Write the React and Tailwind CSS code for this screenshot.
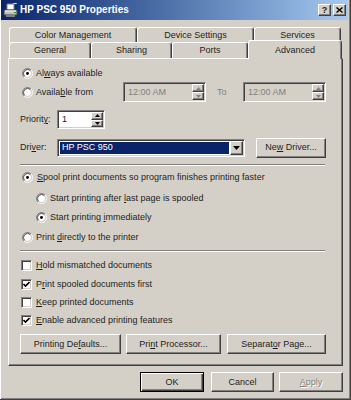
import React from 'react';

const raised =
  'border border-t-white border-l-white border-r-[#404040] border-b-[#404040] shadow-[inset_-1px_-1px_0_#808080]';
const sunken =
  'border border-t-[#808080] border-l-[#808080] border-r-white border-b-white shadow-[inset_1px_1px_0_#404040,inset_-1px_-1px_0_#d4d0c8]';

const U = ({ children }) => <span className="underline underline-offset-[1px]">{children}</span>;

const Radio = ({ on }) => (
  <svg width="11" height="11" viewBox="0 0 12 12" className="shrink-0">
    <circle cx="6" cy="6" r="4.2" fill="#fff" />
    <path d="M2.11 9.89A5.5 5.5 0 0 1 9.89 2.11" fill="none" stroke="#808080" />
    <path d="M9.89 2.11A5.5 5.5 0 0 1 2.11 9.89" fill="none" stroke="#fff" />
    <path d="M2.82 9.18A4.5 4.5 0 0 1 9.18 2.82" fill="none" stroke="#404040" />
    <path d="M9.18 2.82A4.5 4.5 0 0 1 2.82 9.18" fill="none" stroke="#d4d0c8" />
    {on && <circle cx="6" cy="6" r="1.6" fill="#000" />}
  </svg>
);

const Check = ({ on }) => (
  <div className={`w-[11px] h-[11px] shrink-0 bg-white flex items-center justify-center ${sunken}`}>
    {on && (
      <svg width="7" height="7" viewBox="0 0 7 7">
        <path d="M0.5 3l2 2 4-4" fill="none" stroke="#000" strokeWidth="1.6" />
      </svg>
    )}
  </div>
);

const Arrow = ({ down, color = '#000' }) => (
  <svg width="5" height="3" viewBox="0 0 5 3">
    <path d={down ? 'M0 0h5L2.5 3z' : 'M0 3h5L2.5 0z'} fill={color} />
  </svg>
);

const Spin = ({ disabled }) => {
  const c = disabled ? '#808080' : '#000';
  return (
    <div className="flex flex-col w-[12px] h-full shrink-0">
      <div className={`flex-1 bg-[#d4d0c8] flex items-center justify-center ${raised}`}>
        <Arrow color={c} />
      </div>
      <div className={`flex-1 bg-[#d4d0c8] flex items-center justify-center ${raised}`}>
        <Arrow down color={c} />
      </div>
    </div>
  );
};

const TimeField = () => (
  <div className={`w-[83px] h-[20px] flex items-stretch p-[1px] bg-[#d4d0c8] ${sunken}`}>
    <span className="flex-1 flex items-center pl-[3px] text-[#808080]">12:00 AM</span>
    <Spin disabled />
  </div>
);

const Button = ({ w, children, disabled, isDefault }) => (
  <div
    className={`${w} h-[20px] flex items-center justify-center bg-[#d4d0c8] ${
      isDefault
        ? 'border border-black shadow-[inset_1px_1px_0_#fff,inset_-1px_-1px_0_#404040,inset_-2px_-2px_0_#808080]'
        : raised
    } ${disabled ? 'text-[#808080] [text-shadow:1px_1px_0_#fff]' : ''}`}
  >
    <span>{children}</span>
  </div>
);

const Tab = ({ w, children }) => (
  <div
    className={`${w} h-full flex items-center justify-center rounded-t-[3px] border-t border-l border-white border-r border-r-[#404040] shadow-[inset_-1px_0_0_#808080]`}
  >
    {children}
  </div>
);

const PrinterIcon = () => (
  <svg width="15" height="15" viewBox="0 0 15 15" className="shrink-0">
    <path d="M4 1h6l1 1v5H4z" fill="#fff" stroke="#808080" />
    <path d="M1 7h13v5H1z" fill="#c0c0c0" stroke="#404040" />
    <path d="M2 8h11" stroke="#fff" />
    <path d="M3 12h9v2H3z" fill="#808080" />
    <path d="M11 9h2v1h-2z" fill="#00a000" />
    <path d="M10 1l4 -1" stroke="#fff" />
  </svg>
);

const TitleBar = () => (
  <div className="ml-[1px] mr-[2px] h-[20px] shrink-0 bg-linear-to-r from-[#0a246a] to-[#a6caf0] flex items-center">
    <div className="ml-[2px]">
      <PrinterIcon />
    </div>
    <span className="ml-[2px] text-white font-bold text-[10px]">HP PSC 950 Properties</span>
    <div className="ml-auto mr-[2px] flex gap-[2px]">
      <div className={`w-[13px] h-[12px] bg-[#d4d0c8] flex items-center justify-center font-bold text-[9px] ${raised}`}>
        ?
      </div>
      <div className={`w-[13px] h-[12px] bg-[#d4d0c8] flex items-center justify-center ${raised}`}>
        <svg width="7" height="6" viewBox="0 0 7 6">
          <path d="M0.5 0.5l6 5M6.5 0.5l-6 5" stroke="#000" strokeWidth="1.4" />
        </svg>
      </div>
    </div>
  </div>
);

const Tabs = () => (
  <div className="mt-[7px] ml-[9px] w-[333px] flex flex-col shrink-0">
    <div className="flex h-[15px]">
      <Tab w="w-[128px]">Color Management</Tab>
      <Tab w="w-[117px]">Device Settings</Tab>
      <Tab w="w-[87px]">Services</Tab>
    </div>
    <div className="flex h-[16px] items-start">
      <Tab w="w-[82px]">General</Tab>
      <Tab w="w-[81px]">Sharing</Tab>
      <Tab w="w-[76px]">Ports</Tab>
      <div className="relative z-10 -mt-[2px] w-[94px] h-[19px] bg-[#d4d0c8] flex items-center justify-center rounded-t-[3px] border-t border-l border-white border-r border-r-[#404040] shadow-[inset_-1px_0_0_#808080]">
        Advanced
      </div>
    </div>
  </div>
);

const Separator = ({ mt }) => (
  <div className={`${mt} ml-[11px] w-[305px] h-[2px] border-t border-t-[#808080] border-b border-b-white`} />
);

const Panel = () => (
  <div className={`ml-[8px] w-[335px] h-[308px] shrink-0 flex flex-col ${raised}`}>
    <div className="mt-[5px] h-[18px] ml-[13px] flex items-center">
      <Radio on />
      <span className="ml-[3px]">
        Al<U>w</U>ays available
      </span>
    </div>
    <div className="h-[20px] ml-[13px] flex items-center">
      <div className="w-[101px] flex items-center">
        <Radio />
        <span className="ml-[3px]">
          Availa<U>b</U>le from
        </span>
      </div>
      <TimeField />
      <span className="w-[37px] pl-[11px] text-[#808080]">To</span>
      <TimeField />
    </div>
    <div className="mt-[8px] h-[19px] ml-[11px] flex items-center">
      <span className="w-[37px]">
        Priorit<U>y</U>:
      </span>
      <div className={`w-[48px] h-[19px] bg-white flex items-stretch p-[1px] ${sunken}`}>
        <span className="flex-1 flex items-center pl-[3px]">1</span>
        <Spin />
      </div>
    </div>
    <div className="mt-[9px] h-[19px] ml-[11px] flex items-center">
      <span className="w-[37px]">
        Dri<U>v</U>er:
      </span>
      <div className={`w-[188px] h-[18px] bg-white flex items-stretch p-[1px] ${sunken}`}>
        <span className="flex-1 flex items-center pl-[2px] m-[1px] bg-[#0a246a] text-white">HP PSC 950</span>
        <div className={`w-[13px] bg-[#d4d0c8] flex items-center justify-center ${raised}`}>
          <svg width="7" height="4" viewBox="0 0 7 4">
            <path d="M0 0h7L3.5 4z" fill="#000" />
          </svg>
        </div>
      </div>
      <div className="ml-[11px]">
        <Button w="w-[70px]">
          Ne<U>w</U> Driver...
        </Button>
      </div>
    </div>
    <Separator mt="mt-[7px]" />
    <div className="mt-[2px] h-[18px] ml-[13px] flex items-center">
      <Radio on />
      <span className="ml-[4px]">
        <U>S</U>pool print documents so program finishes printing faster
      </span>
    </div>
    <div className="mt-[3px] h-[18px] ml-[27px] flex items-center">
      <Radio />
      <span className="ml-[3px]">
        Start printing after <U>l</U>ast page is spooled
      </span>
    </div>
    <div className="mt-[1px] h-[18px] ml-[27px] flex items-center">
      <Radio on />
      <span className="ml-[3px]">
        Start printing <U>i</U>mmediately
      </span>
    </div>
    <div className="mt-[2px] h-[18px] ml-[13px] flex items-center">
      <Radio />
      <span className="ml-[3px]">
        Print <U>d</U>irectly to the printer
      </span>
    </div>
    <Separator mt="mt-[4px]" />
    <div className="mt-[4px] h-[18px] ml-[12px] flex items-center">
      <Check />
      <span className="ml-[4px]">
        <U>H</U>old mismatched documents
      </span>
    </div>
    <div className="mt-[1px] h-[18px] ml-[12px] flex items-center">
      <Check on />
      <span className="ml-[4px]">
        P<U>r</U>int spooled documents first
      </span>
    </div>
    <div className="h-[18px] ml-[12px] flex items-center">
      <Check />
      <span className="ml-[4px]">
        <U>K</U>eep printed documents
      </span>
    </div>
    <div className="h-[18px] ml-[12px] flex items-center">
      <Check on />
      <span className="ml-[4px]">
        <U>E</U>nable advanced printing features
      </span>
    </div>
    <div className="mt-[5px] ml-[11px] flex">
      <Button w="w-[101px]">
        Printing De<U>f</U>aults...
      </Button>
      <div className="ml-[5px]">
        <Button w="w-[95px]">
          Pri<U>n</U>t Processor...
        </Button>
      </div>
      <div className="ml-[6px]">
        <Button w="w-[99px]">
          Separat<U>o</U>r Page...
        </Button>
      </div>
    </div>
  </div>
);

const Footer = () => (
  <div className="mt-[6px] ml-[140px] flex">
    <Button w="w-[64px]" isDefault>
      OK
    </Button>
    <div className="ml-[7px]">
      <Button w="w-[63px]">Cancel</Button>
    </div>
    <div className="ml-[5px]">
      <Button w="w-[64px]" disabled>
        <U>A</U>pply
      </Button>
    </div>
  </div>
);

export default function App() {
  return (
    <div className="w-[351px] h-[400px] bg-[#d4d0c8] font-['Liberation_Sans',Arial,sans-serif] text-[9px] leading-none text-[#1e1e1e] border-r border-b border-[#404040] shadow-[inset_1px_0_0_#fff,inset_-1px_-1px_0_#808080] flex flex-col overflow-hidden select-none">
      <TitleBar />
      <Tabs />
      <Panel />
      <Footer />
    </div>
  );
}
